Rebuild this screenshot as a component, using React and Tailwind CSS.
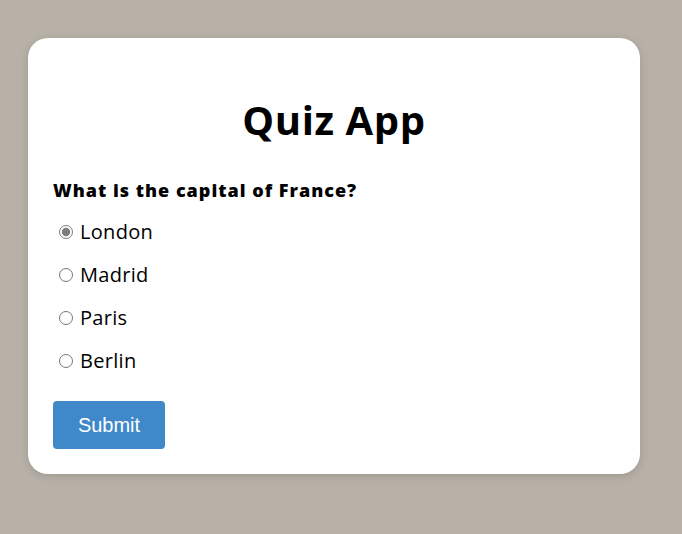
import { useState } from "react";

const options = ["London", "Madrid", "Paris", "Berlin"];

export default function App() {
  const [answer, setAnswer] = useState("London");

  return (
    <div className="min-h-[534px] bg-[#b8b1a8] pt-[38px] pl-[28px] pr-[42px] pb-[60px]">
      <div
        className="w-[612px] rounded-[20px] bg-white px-[25px] pb-[25px] pt-[27px] shadow-[0_2px_8px_rgba(0,0,0,0.15)]"
        style={{ fontFamily: '"Open Sans", sans-serif' }}
      >
        <h1 className="mt-[25px] mb-[27px] text-center text-[40px] leading-[60px] font-bold tracking-[0.6px] text-black">Quiz App</h1>
        <h2 className="mb-[13px] text-[18px] leading-[27px] font-extrabold tracking-[1px] text-black">What is the capital of France?</h2>

        <div className="flex flex-col gap-[13px]">
          {options.map((opt) => (
            <label key={opt} className="flex h-[30px] items-center text-[20px] leading-[30px] tracking-[0.3px] text-black">
              <input
                type="radio"
                name="capital"
                checked={answer === opt}
                onChange={() => setAnswer(opt)}
                className="mr-[7px] ml-[6px] h-[14px] w-[14px] accent-[#7d7d7d]"
              />
              {opt}
            </label>
          ))}
        </div>

        <button
          className="mt-[25px] h-[48px] w-[112px] rounded-[4px] bg-[#3f88c9] text-[20px] text-white"
          style={{ fontFamily: '"Liberation Sans", Arial, sans-serif' }}
        >
          Submit
        </button>
      </div>
    </div>
  );
}
